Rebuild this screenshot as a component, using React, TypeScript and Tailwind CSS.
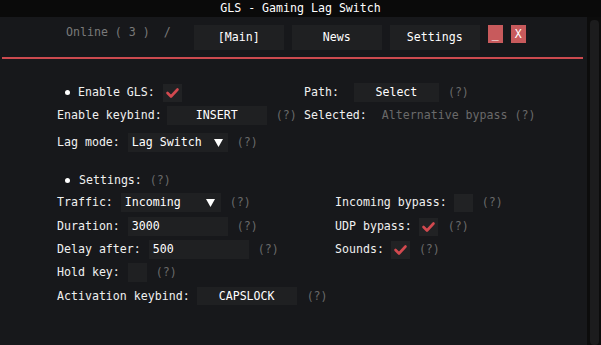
import React from 'react';

const font = { fontFamily: '"DejaVu Sans Mono", "Liberation Mono", monospace' };

const Help = ({ className = '' }: { className?: string }) => (
  <span className={`text-[#6a6a6a] ${className}`}>(?)</span>
);

const Check = () => (
  <svg width="19" height="18" viewBox="0 0 19 18">
    <polyline points="4.5,9 8,12.5 14.5,5.5" fill="none" stroke="#d2494f" strokeWidth="2.6" strokeLinecap="round" strokeLinejoin="round" />
  </svg>
);

const Box = ({ checked }: { checked?: boolean }) => (
  <div className="w-[19px] h-[18px] bg-[#212224] flex items-center justify-center">{checked && <Check />}</div>
);

const Arrow = () => (
  <svg width="9" height="8" viewBox="0 0 9 8">
    <polygon points="0,0 9,0 4.5,8" fill="#ffffff" />
  </svg>
);

const Bullet = () => <span className="w-[5px] h-[5px] rounded-full bg-white" />;

const App: React.FC = () => {
  return (
    <div style={font} className="w-[601px] h-[345px] bg-[#0d0d0e] text-[11.6px] text-[#f0f0f0] overflow-hidden leading-[15px]">
      {/* Title bar */}
      <div className="h-[17px] bg-[#0a0a0a] flex items-center justify-center text-white">GLS - Gaming Lag Switch</div>

      <div className="flex h-[328px]">
        {/* Window body */}
        <div className="w-[587px] bg-[#17181b] flex flex-col">
          {/* Header */}
          <div className="flex items-start pt-[8px] pl-[66px] h-[33px]">
            <span className="text-[#7a7a7a] whitespace-pre">Online ( 3 )  /</span>
            <div className="flex gap-[8px] ml-[23px]">
              <div className="w-[90px] h-[25px] bg-[#1f2022] flex items-center justify-center text-white">[Main]</div>
              <div className="w-[90px] h-[25px] bg-[#1f2022] flex items-center justify-center text-white">News</div>
              <div className="w-[90px] h-[25px] bg-[#1f2022] flex items-center justify-center text-white">Settings</div>
              <div className="w-[15px] h-[18px] bg-[#c85a5c] flex items-center justify-center text-white">_</div>
              <div className="w-[15px] h-[18px] bg-[#c85a5c] flex items-center justify-center text-white">X</div>
            </div>
          </div>
          <div className="ml-[2px] w-[581px] h-[2px] bg-[#cc4a4f] mt-[7px]" />

          {/* Content */}
          <div className="pl-[57px] mt-[24px] flex flex-col">
            <div className="flex h-[19px] items-center">
              <div className="w-[247px] flex items-center">
                <span className="ml-[8px] mr-[8px] flex"><Bullet /></span>
                <span>Enable GLS:</span>
                <span className="ml-[8px]"><Box checked /></span>
              </div>
              <span>Path:</span>
              <div className="ml-[15px] w-[85px] h-[19px] bg-[#1f2022] flex items-center justify-center text-white">Select</div>
              <Help className="ml-[9px]" />
            </div>

            <div className="flex h-[19px] items-center mt-[4px]">
              <div className="w-[247px] flex items-center">
                <span>Enable keybind:</span>
                <div className="ml-[5px] w-[100px] h-[19px] bg-[#1f2022] flex items-center justify-center text-white">INSERT</div>
                <Help className="ml-[9px]" />
              </div>
              <span>Selected:</span>
              <span className="ml-[15px] text-[#6a6a6a]">Alternative bypass (?)</span>
            </div>

            <div className="flex h-[19px] items-center mt-[8px]">
              <span>Lag mode:</span>
              <div className="ml-[8px] w-[100px] h-[19px] bg-[#1f2022] flex items-center pl-[4px] pr-[5px] justify-between text-white">
                <span>Lag Switch</span>
                <Arrow />
              </div>
              <Help className="ml-[9px]" />
            </div>

            <div className="flex h-[19px] items-center mt-[19px]">
              <span className="ml-[8px] mr-[9px] flex"><Bullet /></span>
              <span>Settings:</span>
              <Help className="ml-[8px]" />
            </div>

            <div className="flex h-[19px] items-center mt-[3px]">
              <div className="w-[278px] flex items-center">
                <span>Traffic:</span>
                <div className="ml-[8px] w-[100px] h-[19px] bg-[#1f2022] flex items-center pl-[4px] pr-[6px] justify-between text-white">
                  <span>Incoming</span>
                  <Arrow />
                </div>
                <Help className="ml-[9px]" />
              </div>
              <span>Incoming bypass:</span>
              <span className="ml-[7px]"><Box /></span>
              <Help className="ml-[9px]" />
            </div>

            <div className="flex h-[19px] items-center mt-[5px]">
              <div className="w-[278px] flex items-center">
                <span>Duration:</span>
                <div className="ml-[8px] w-[100px] h-[19px] bg-[#1f2022] flex items-center pl-[4px] text-white">3000</div>
                <Help className="ml-[9px]" />
              </div>
              <span>UDP bypass:</span>
              <span className="ml-[7px]"><Box checked /></span>
              <Help className="ml-[10px]" />
            </div>

            <div className="flex h-[19px] items-center mt-[4px]">
              <div className="w-[278px] flex items-center">
                <span>Delay after:</span>
                <div className="ml-[8px] w-[100px] h-[19px] bg-[#1f2022] flex items-center pl-[4px] text-white">500</div>
                <Help className="ml-[9px]" />
              </div>
              <span>Sounds:</span>
              <span className="ml-[7px]"><Box checked /></span>
              <Help className="ml-[9px]" />
            </div>

            <div className="flex h-[19px] items-center mt-[4px]">
              <span>Hold key:</span>
              <div className="ml-[8px] w-[19px] h-[19px] bg-[#1f2022]" />
              <Help className="ml-[9px]" />
            </div>

            <div className="flex h-[18px] items-center mt-[5px]">
              <span>Activation keybind:</span>
              <div className="ml-[7px] w-[100px] h-[18px] bg-[#1f2022] flex items-center justify-center text-white">CAPSLOCK</div>
              <Help className="ml-[10px]" />
            </div>
          </div>
        </div>

        {/* Scrollbar */}
        <div className="w-[14px] bg-[#0c0c0c] pt-[3px] pl-[3px]">
          <div className="w-[9px] h-[325px] rounded-[4px] bg-[#1c1c1d]" />
        </div>
      </div>
    </div>
  );
};

export default App;
